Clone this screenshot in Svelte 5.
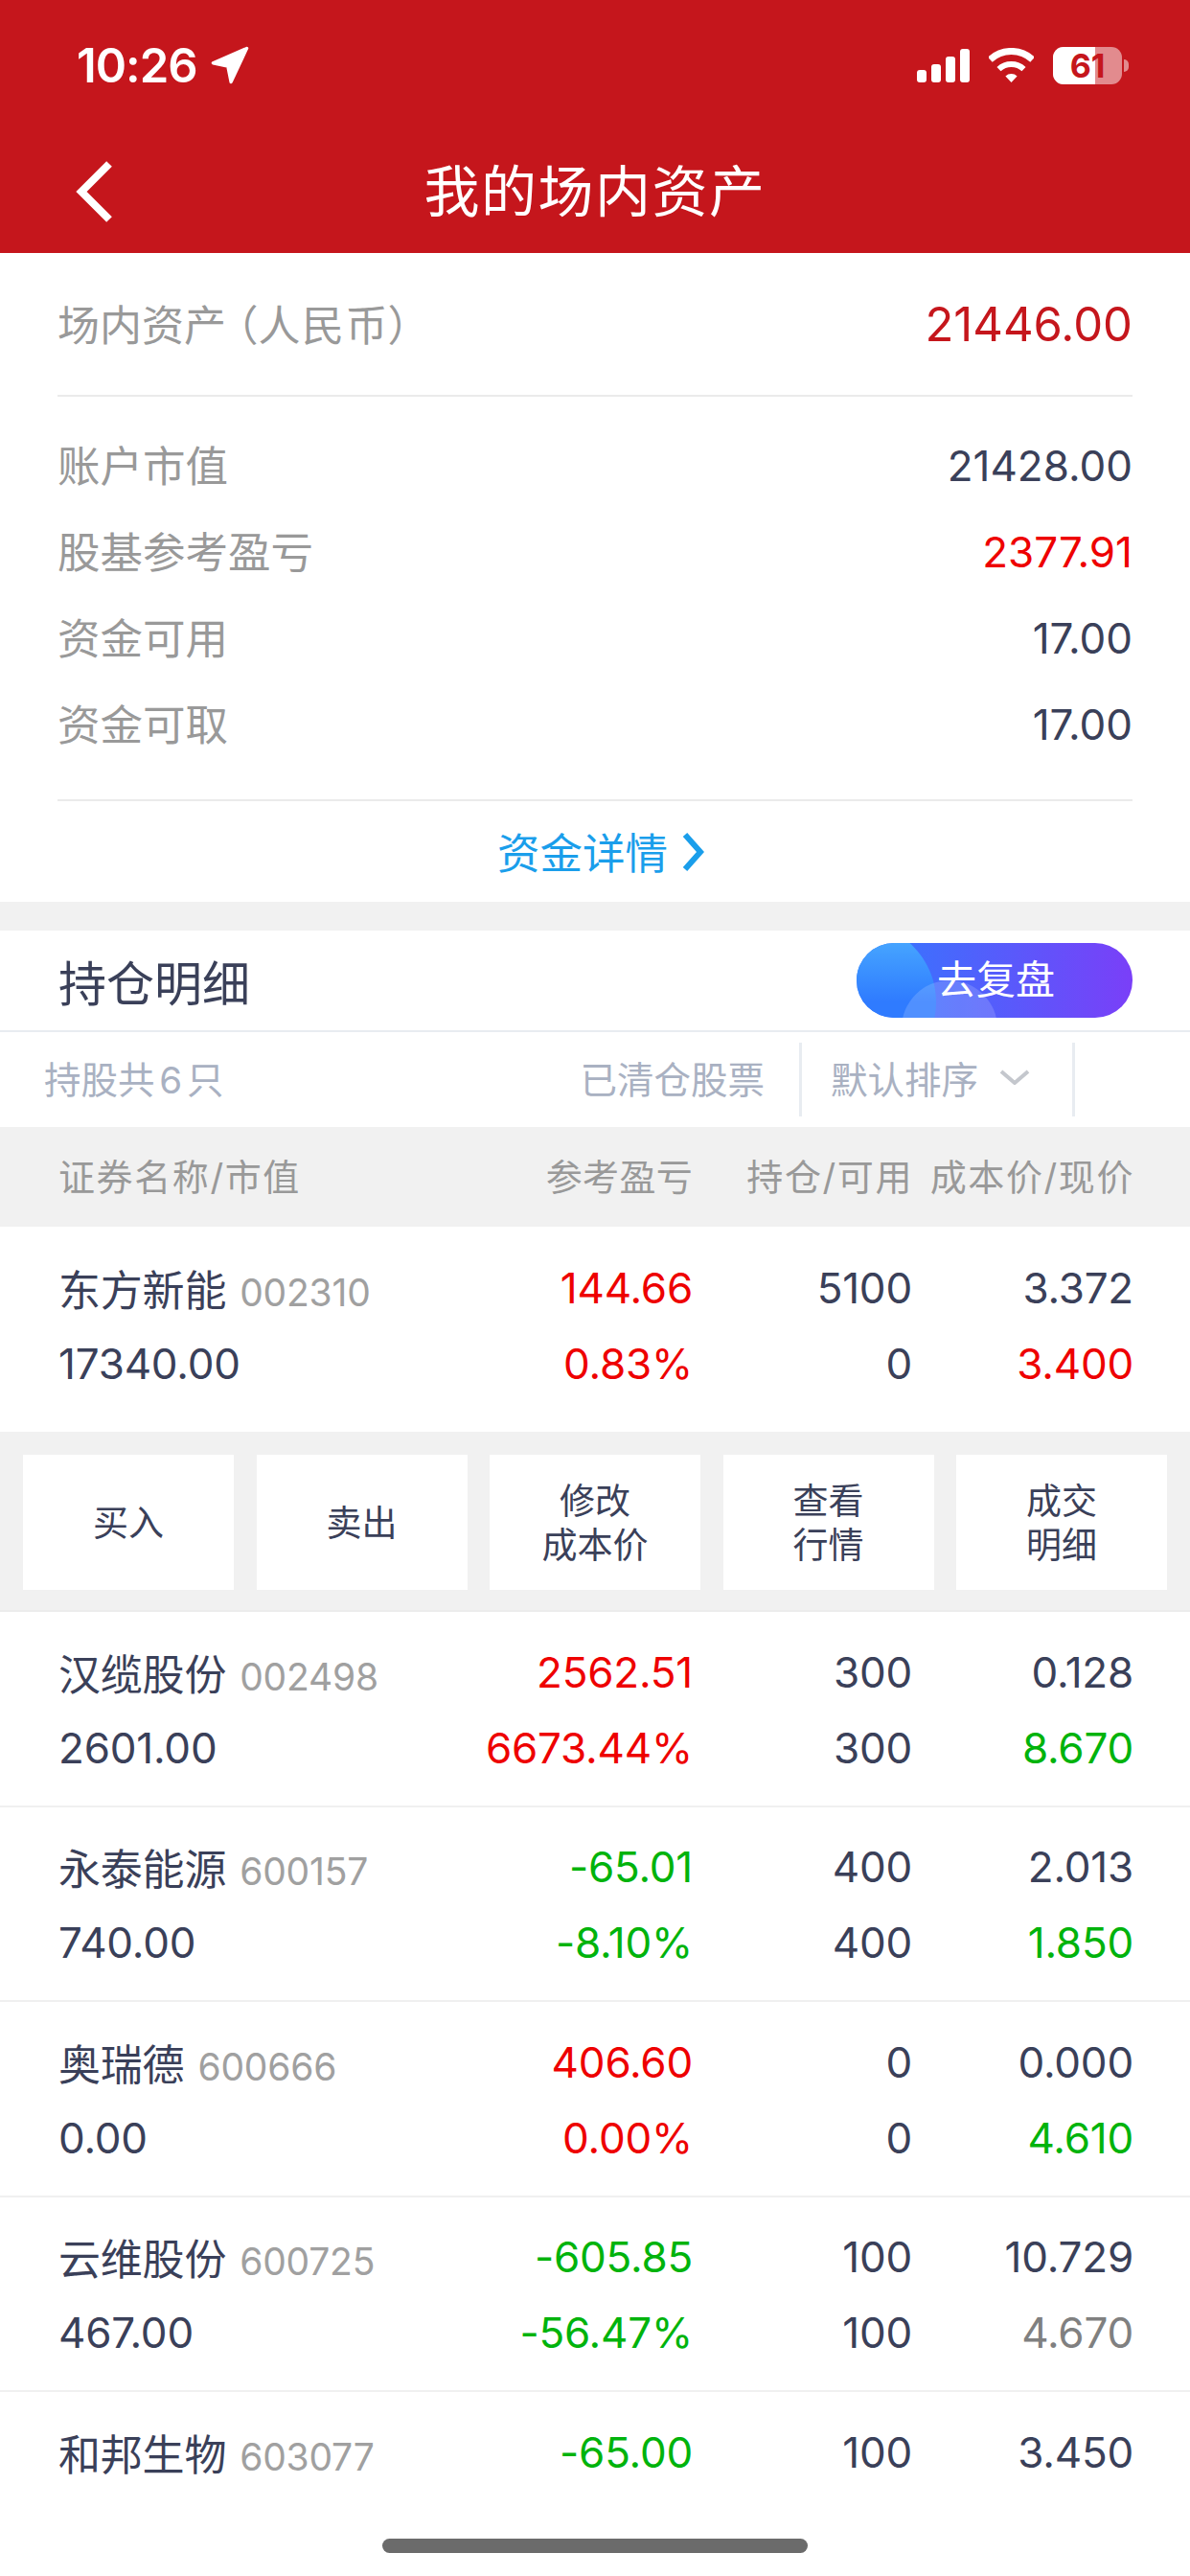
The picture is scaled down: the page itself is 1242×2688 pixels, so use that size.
<script>
    const summary = [
        {label: '账户市值', value: '21428.00', tone: ''},
        {label: '股基参考盈亏', value: '2377.91', tone: 'up'},
        {label: '资金可用', value: '17.00', tone: ''},
        {label: '资金可取', value: '17.00', tone: ''}
    ]

    const actions = [['买入'], ['卖出'], ['修改', '成本价'], ['查看', '行情'], ['成交', '明细']]

    const first = {name: '东方新能', code: '002310', value: '17340.00', pnl: '144.66', pct: '0.83%', qty: '5100', free: '0', cost: '3.372', price: '3.400', tone: 'up', priceTone: 'up'}

    const rows = [
        {name: '汉缆股份', code: '002498', value: '2601.00', pnl: '2562.51', pct: '6673.44%', qty: '300', free: '300', cost: '0.128', price: '8.670', tone: 'up', priceTone: 'down'},
        {name: '永泰能源', code: '600157', value: '740.00', pnl: '-65.01', pct: '-8.10%', qty: '400', free: '400', cost: '2.013', price: '1.850', tone: 'down', priceTone: 'down'},
        {name: '奥瑞德', code: '600666', value: '0.00', pnl: '406.60', pct: '0.00%', qty: '0', free: '0', cost: '0.000', price: '4.610', tone: 'up', priceTone: 'down'},
        {name: '云维股份', code: '600725', value: '467.00', pnl: '-605.85', pct: '-56.47%', qty: '100', free: '100', cost: '10.729', price: '4.670', tone: 'down', priceTone: 'flat'},
        {name: '和邦生物', code: '603077', pnl: '-65.00', qty: '100', cost: '3.450', tone: 'down'}
    ]
</script>

{#snippet holding(r)}
    <div class="cell name"><span>{r.name}</span><span class="code">{r.code}</span></div>
    <div class="cell {r.tone}">{r.pnl}</div>
    <div class="cell">{r.qty}</div>
    <div class="cell">{r.cost}</div>
    {#if r.value}
        <div class="cell name">{r.value}</div>
        <div class="cell {r.tone}">{r.pct}</div>
        <div class="cell">{r.free}</div>
        <div class="cell {r.priceTone}">{r.price}</div>
    {/if}
{/snippet}

<div class="page">
    <header class="header">
        <div class="status">
            <div class="time">
                <span>10:26</span>
                <svg class="arrow" viewBox="0 0 40 40" width="44" height="44">
                    <path d="M36 4 L4 18 L18 21 L21 36 Z" fill="#fff" stroke="#fff" stroke-width="3" stroke-linejoin="round"/>
                </svg>
            </div>
            <div class="indicators">
                <svg viewBox="0 0 55 35" width="55" height="35">
                    <rect x="0" y="22" width="10" height="13" rx="3" fill="#fff"/>
                    <rect x="15" y="16" width="10" height="19" rx="3" fill="#fff"/>
                    <rect x="30" y="8" width="10" height="27" rx="3" fill="#fff"/>
                    <rect x="45" y="0" width="10" height="35" rx="3" fill="#fff"/>
                </svg>
                <svg viewBox="0 0 47 36" width="47" height="36">
                    <path d="M1.3 12.2A32.5 32.5 0 0 1 45.7 12.2" fill="none" stroke="#fff" stroke-width="7"/>
                    <path d="M10.5 22.1A19 19 0 0 1 36.5 22.1" fill="none" stroke="#fff" stroke-width="6"/>
                    <path d="M23.5 36L17.4 29.4A9 9 0 0 1 29.6 29.4Z" fill="#fff"/>
                </svg>
                <div class="battery">
                    <div class="level"></div>
                    <span>61</span>
                    <i class="nub"></i>
                </div>
            </div>
        </div>
        <div class="nav">
            <svg class="back" viewBox="0 0 38 64" width="38" height="64">
                <path d="M35 3 L6 32 L35 61" fill="none" stroke="#fff" stroke-width="8"/>
            </svg>
            <h1>我的场内资产</h1>
        </div>
    </header>

    <section class="summary">
        <div class="total">
            <span class="total-label">场内资产<span class="paren">（人民币）</span></span>
            <strong>21446.00</strong>
        </div>
        <div class="lines">
            {#each summary as item}
                <div class="line">
                    <span class="label">{item.label}</span>
                    <span class="value {item.tone}">{item.value}</span>
                </div>
            {/each}
        </div>
        <div class="detail">
            <span>资金详情</span>
            <svg viewBox="0 0 24 40" width="24" height="40">
                <path d="M4 2 L20 20 L4 38" fill="none" stroke="#1a9eeb" stroke-width="6"/>
            </svg>
        </div>
    </section>

    <section class="holdings">
        <div class="title-row">
            <h2>持仓明细</h2>
            <div class="review">去复盘</div>
        </div>
        <div class="filters">
            <span class="count">持股共 6 只</span>
            <span class="cleared">已清仓股票</span>
            <div class="sort">
                <span>默认排序</span>
                <svg viewBox="0 0 32 16" width="32" height="16">
                    <path d="M2 2 L16 14 L30 2" fill="none" stroke="#c4c7cd" stroke-width="4"/>
                </svg>
            </div>
        </div>
        <div class="table-head">
            <span class="grow">证券名称/市值</span>
            <span class="h-pnl">参考盈亏</span>
            <span class="h-qty">持仓/可用</span>
            <span class="h-cost">成本价/现价</span>
        </div>

        <div class="row first">
            {@render holding(first)}
        </div>
        <div class="actions">
            {#each actions as lines}
                <div class="action">
                    {#each lines as text}
                        <span>{text}</span>
                    {/each}
                </div>
            {/each}
        </div>
        {#each rows as r}
            <div class="row">
                {@render holding(r)}
            </div>
        {/each}
    </section>

    <div class="home"></div>
</div>

<style>
    :global(body) {
        margin: 0;
        background: #fff;
    }

    .page {
        position: relative;
        width: 1242px;
        height: 2688px;
        overflow: hidden;
        background: #fff;
        color: #3a4059;
        font-family: Inter, "Noto Sans CJK SC", sans-serif;
    }

    .header {
        background: #c5161c;
        height: 264px;
        color: #fff;
    }

    .status {
        height: 136px;
        display: flex;
        justify-content: space-between;
        align-items: center;
        padding: 0 71px 0 80px;
        box-sizing: border-box;
    }

    .time {
        display: flex;
        align-items: center;
        gap: 12px;
        font-weight: 600;
        font-size: 49px;
        letter-spacing: -1px;
    }

    .indicators {
        display: flex;
        align-items: center;
        gap: 20px;
    }

    .battery {
        position: relative;
        width: 72px;
        height: 39px;
        border-radius: 11px;
        background: rgba(255, 255, 255, 0.5);
        color: #c5161c;
        font-weight: 700;
        font-size: 34px;
        line-height: 39px;
        text-align: center;
    }

    .level {
        position: absolute;
        left: 0;
        top: 0;
        bottom: 0;
        width: 44px;
        background: #fff;
        border-radius: 11px 0 0 11px;
    }

    .battery span {
        position: relative;
    }

    .nub {
        position: absolute;
        right: -7px;
        top: 13px;
        width: 5px;
        height: 13px;
        border-radius: 0 6px 6px 0;
        background: rgba(255, 255, 255, 0.5);
    }

    .nav {
        position: relative;
        height: 128px;
        display: flex;
        align-items: center;
        justify-content: center;
    }

    .back {
        position: absolute;
        left: 79px;
        top: 32px;
    }

    h1 {
        margin: 0;
        font-weight: 400;
        font-size: 58px;
        letter-spacing: 1.5px;
        line-height: 1;
    }

    .summary {
        height: 677px;
        display: flex;
        flex-direction: column;
    }

    .total {
        height: 148px;
        margin: 0 60px;
        border-bottom: 2px solid #ebebeb;
        display: flex;
        justify-content: space-between;
        align-items: center;
        font-size: 44px;
        color: #999;
    }

    .total-label {
        margin-top: -3px;
    }

    .total strong {
        font-weight: 400;
        font-size: 49px;
        color: #c5161c;
    }

    .paren {
        font-feature-settings: "palt";
        margin-left: 10px;
        letter-spacing: 1.5px;
    }

    .lines {
        margin: 0 60px;
        padding: 27px 0 33px;
        border-bottom: 2px solid #ebebeb;
    }

    .line {
        height: 90px;
        display: flex;
        justify-content: space-between;
        align-items: center;
    }

    .label {
        font-size: 44.5px;
        color: #999;
        margin-top: -5px;
    }

    .value {
        font-size: 44px;
    }

    .detail {
        flex: 1;
        display: flex;
        justify-content: center;
        align-items: center;
        gap: 14px;
        padding-left: 12px;
        font-size: 44.5px;
        color: #1a9eeb;
    }

    .detail span {
        margin-top: -3px;
    }

    .holdings {
        margin-top: 30px;
    }

    .summary + .holdings {
        box-shadow: 0 -30px 0 #f1f1f1;
    }

    .title-row {
        height: 104px;
        display: flex;
        justify-content: space-between;
        align-items: center;
        padding: 0 60px 0 61px;
        border-bottom: 2px solid #e8ecf1;
    }

    h2 {
        margin: 0;
        font-weight: 400;
        font-size: 50px;
    }

    .review {
        position: relative;
        width: 288px;
        height: 78px;
        box-sizing: border-box;
        padding-left: 84px;
        border-radius: 39px;
        overflow: hidden;
        background: linear-gradient(90deg, #2f7bff 0%, #7a3ff8 100%);
        color: #fff;
        font-size: 41px;
        line-height: 76px;
        isolation: isolate;
    }

    .review::before,
    .review::after {
        content: '';
        position: absolute;
        border-radius: 50%;
        z-index: -1;
    }

    .review::before {
        left: -82px;
        top: -21px;
        width: 165px;
        height: 165px;
        background: linear-gradient(180deg, #4db2ff 0%, #2f7bff 50%);
    }

    .review::after {
        left: 47px;
        top: 39px;
        width: 100px;
        height: 100px;
        background: rgba(255, 255, 255, 0.16);
    }

    .filters {
        height: 99px;
        display: flex;
        align-items: center;
        color: #a9b1c2;
        font-size: 38.5px;
    }

    .count {
        margin-left: 46px;
        margin-right: auto;
        margin-top: -6px;
        word-spacing: -6px;
    }

    .cleared {
        margin-right: 36px;
        margin-top: -6px;
    }

    .sort {
        width: 288px;
        height: 77px;
        box-sizing: border-box;
        margin-right: 120px;
        padding: 0 0 6px 30px;
        border-left: 3px solid #e8ecf1;
        border-right: 3px solid #e8ecf1;
        display: flex;
        align-items: center;
        gap: 22px;
    }

    .table-head {
        height: 104px;
        box-sizing: border-box;
        padding: 0 58px 6px 61px;
        background: #f1f1f1;
        display: flex;
        align-items: center;
        color: #999;
        font-size: 38px;
        letter-spacing: 1.6px;
        white-space: nowrap;
    }

    .grow {
        flex: 1;
    }

    .h-pnl {
        margin-right: 56px;
        letter-spacing: 0.3px;
    }

    .h-qty {
        width: 174px;
        text-align: right;
    }

    .h-cost {
        width: 231px;
        text-align: right;
    }

    .row {
        height: 203.5px;
        box-sizing: border-box;
        padding: 23px 59px 0 61px;
        border-bottom: 2px solid #f0f0f0;
        display: grid;
        grid-template-columns: 1fr 240px 229px 231px;
        grid-auto-rows: 79px;
        align-items: center;
    }

    .row.first {
        height: 214px;
        padding-top: 24px;
        border-bottom: 0;
    }

    .cell {
        text-align: right;
        font-size: 44px;
        letter-spacing: -0.2px;
        white-space: nowrap;
    }

    .cell.name {
        grid-column: 1;
        text-align: left;
        display: flex;
        align-items: baseline;
        gap: 14px;
    }

    .cell.name span:first-child {
        font-size: 44px;
    }

    .code {
        font-size: 39px;
        color: #a0a0a0;
    }

    .up {
        color: #ee0000;
    }

    .down {
        color: #00b30c;
    }

    .flat {
        color: #808080;
    }

    .actions {
        height: 188px;
        box-sizing: border-box;
        background: #f1f1f1;
        border-bottom: 2px solid #ececec;
        padding: 24px 24px 21px;
        display: grid;
        grid-template-columns: repeat(5, 1fr);
        gap: 23.5px;
    }

    .action {
        background: #fff;
        display: flex;
        flex-direction: column;
        align-items: center;
        justify-content: center;
        padding-top: 2px;
        font-size: 37px;
        line-height: 46px;
    }

    .home {
        position: absolute;
        left: 399px;
        top: 2649px;
        width: 444px;
        height: 15px;
        border-radius: 8px;
        background: #6b6b6b;
    }
</style>
